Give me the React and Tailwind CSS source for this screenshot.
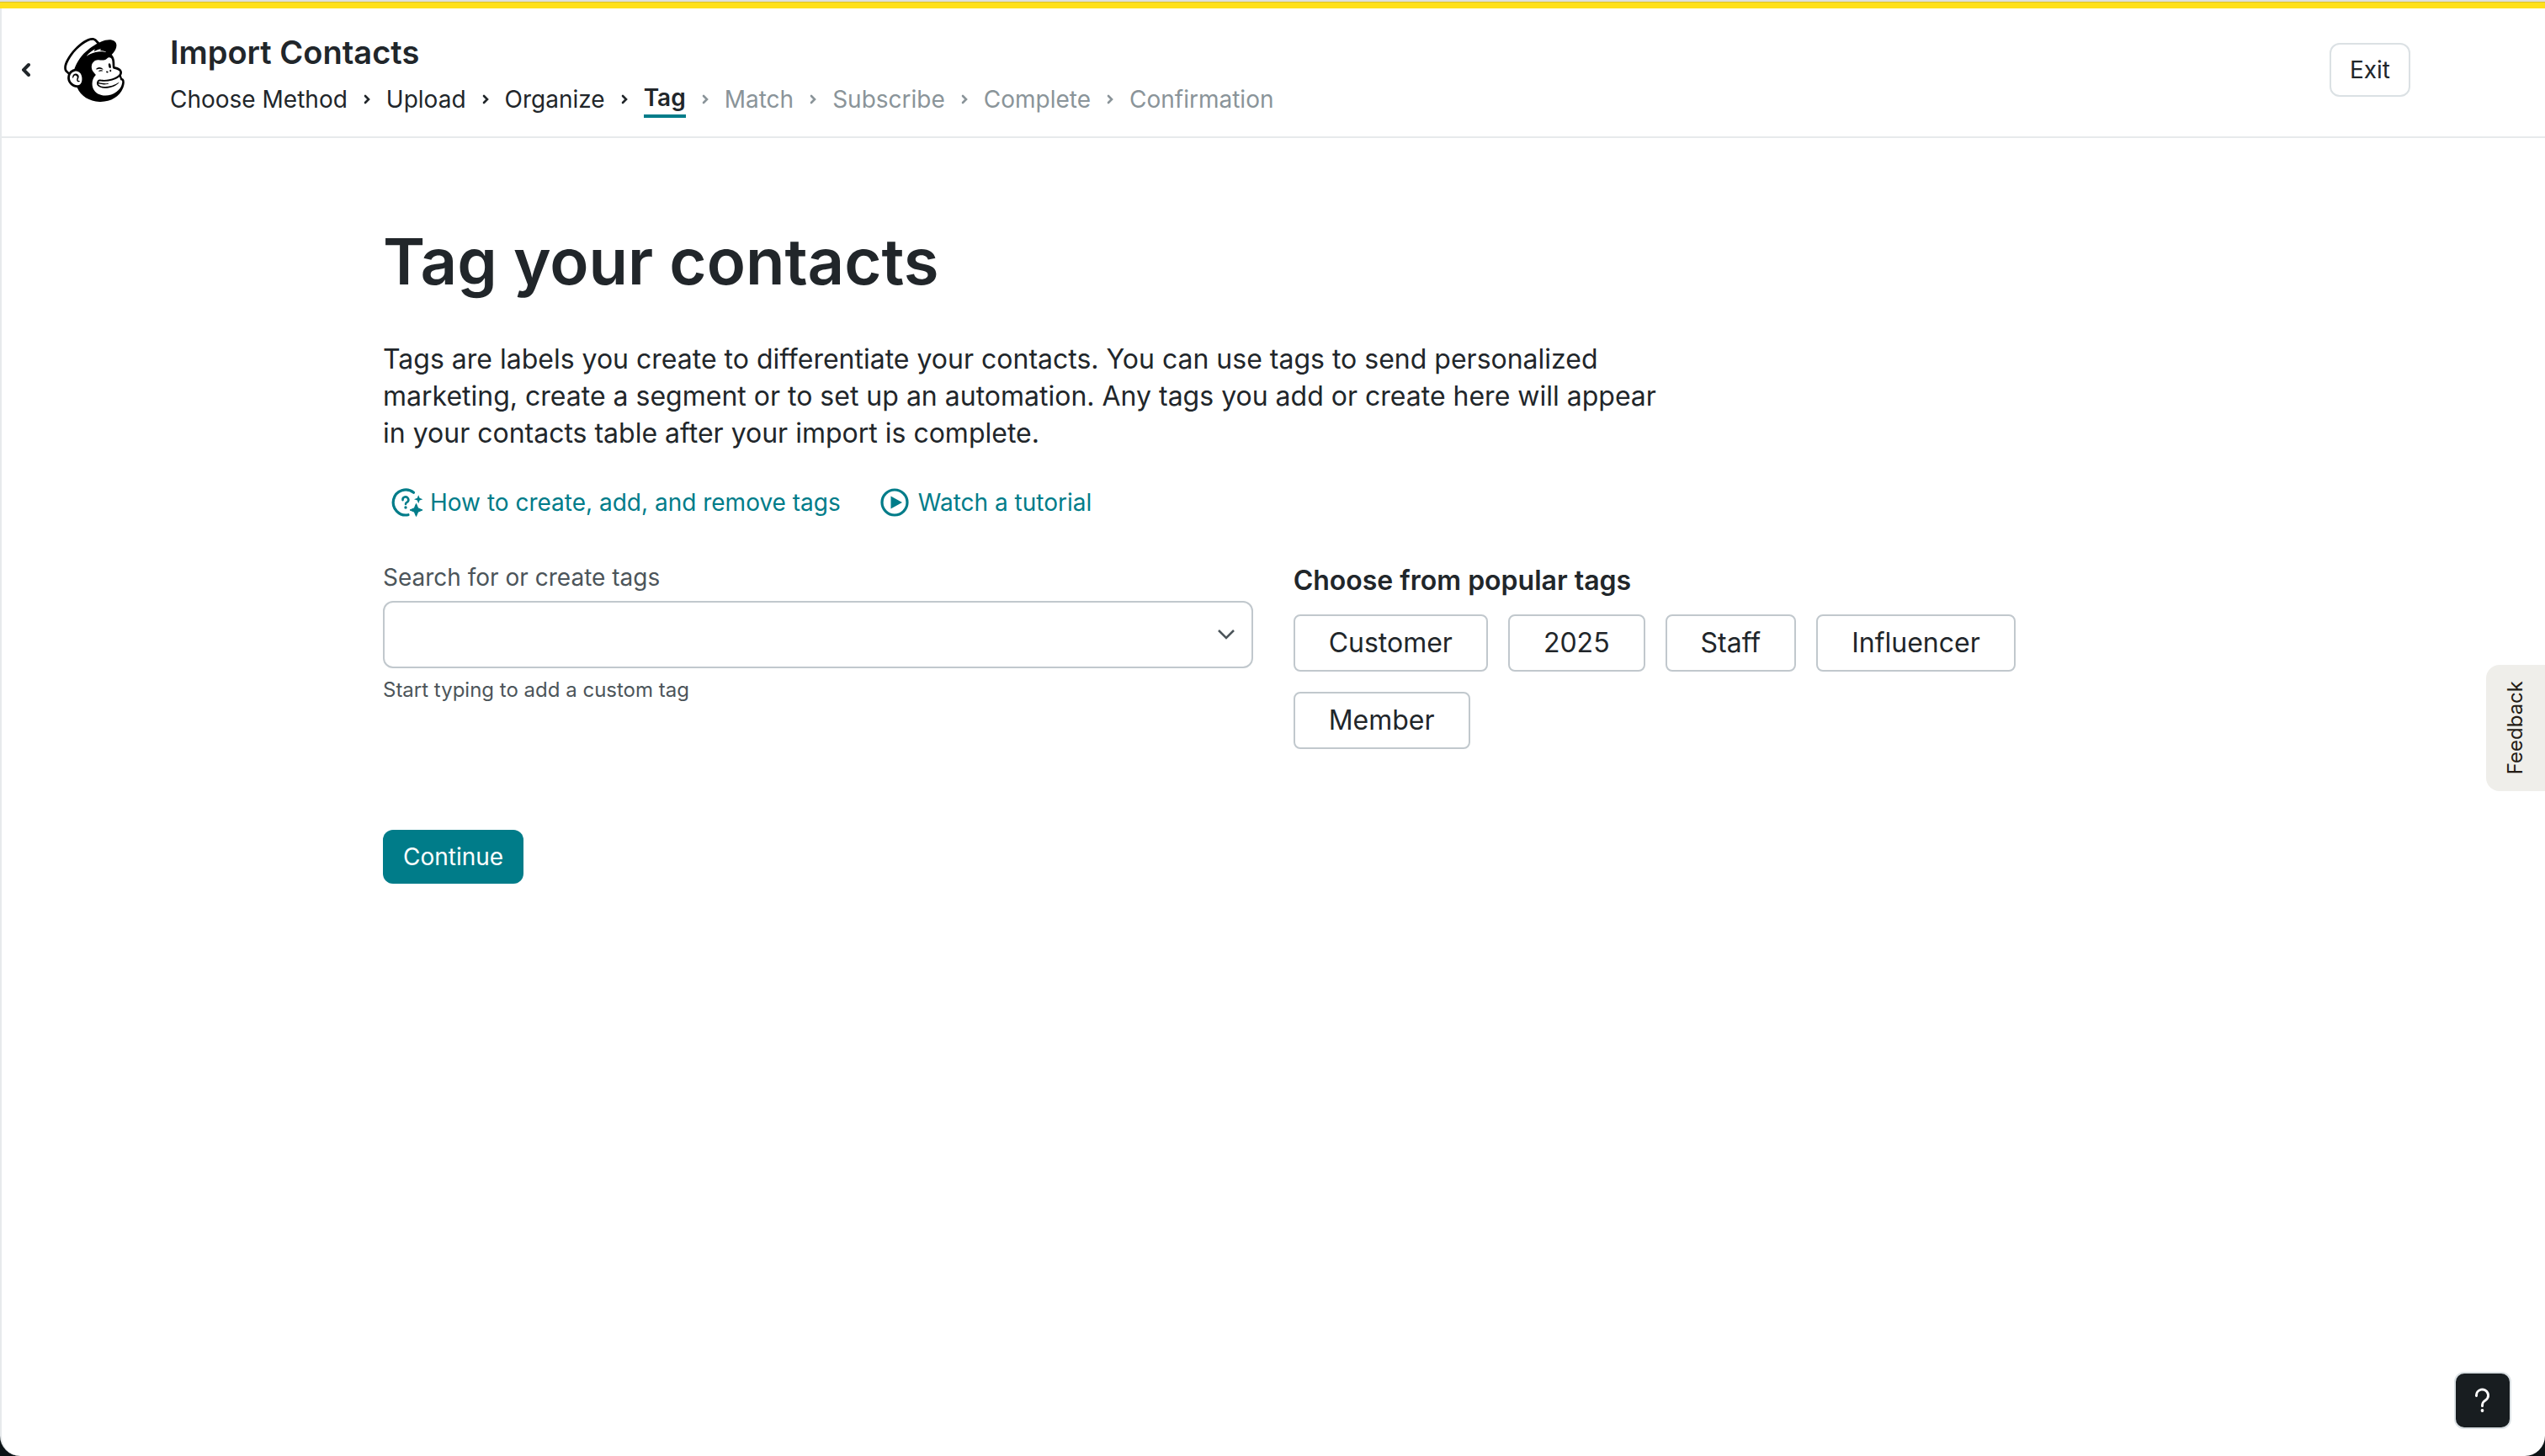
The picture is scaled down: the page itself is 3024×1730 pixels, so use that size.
import React, { useState } from "react";
import { SiMailchimp } from "react-icons/si";

const steps = [
  "Choose Method",
  "Upload",
  "Organize",
  "Tag",
  "Match",
  "Subscribe",
  "Complete",
  "Confirmation",
];
const currentStep = 3;

const popularTags = ["Customer", "2025", "Staff", "Influencer", "Member"];

function HelpSparkleIcon() {
  return (
    <svg viewBox="0 0 40 40" className="w-10 h-10" fill="none" aria-hidden="true">
      <path
        d="M28.500 8.200A15 15 0 1 0 22 34.700"
        stroke="currentColor"
        strokeWidth="3.200"
        strokeLinecap="round"
      />
      <path
        d="M15.500 17.200A3.400 3.400 0 1 1 20.800 19.600C19.500 20.300 19 20.800 19 22"
        stroke="currentColor"
        strokeWidth="2.600"
        strokeLinecap="round"
      />
      <circle cx="19" cy="26" r="1.700" fill="currentColor" />
      <path
        d="M34.200 11.200l1.400 3.600 3.800 1.400-3.800 1.400-1.400 3.600-1.400-3.600-3.800-1.400 3.800-1.400z"
        fill="currentColor"
      />
      <path
        d="M31.500 21.500l2.200 5.300 5.300 2.200-5.300 2.200-2.200 5.300-2.200-5.300-5.300-2.200 5.300-2.200z"
        fill="currentColor"
        stroke="currentColor"
      />
    </svg>
  );
}

function PlayCircleIcon() {
  return (
    <svg viewBox="0 0 40 40" className="w-10 h-10" fill="none" aria-hidden="true">
      <circle cx="20" cy="20" r="15" stroke="currentColor" strokeWidth="3.200" />
      <path d="M15.500 12.500l13.500 7.500-13.500 7.500z" fill="currentColor" />
    </svg>
  );
}

function StepChevron() {
  return (
    <svg viewBox="0 0 8 12" className="w-2 h-3" fill="none" aria-hidden="true">
      <path d="M2 2l4 4-4 4" stroke="currentColor" strokeWidth="2.600" strokeLinecap="round" />
    </svg>
  );
}

function Header() {
  return (
    <header className="flex items-center h-[154px] pl-6 pr-40 pb-1.5 border-b-2 border-[#e7eaec]">
      <button type="button" aria-label="Back" className="w-4 h-5">
        <svg viewBox="0 0 16 20" className="w-4 h-5" fill="none" aria-hidden="true">
          <path d="M8 4l-6 6 6 6" stroke="currentColor" strokeWidth="4" strokeLinecap="round" />
        </svg>
      </button>
      <SiMailchimp className="w-[76px] h-[76px] ml-8 text-black" />
      <div className="flex flex-col ml-[52px] pt-2.5">
        <p className="text-[38px] leading-[52px] font-semibold">Import Contacts</p>
        <ol className="flex items-center mt-2 text-[28px] leading-[44px]">
          {steps.map((step, i) => (
            <li
              key={step}
              className={i > currentStep ? "flex items-center text-[#8a9499]" : "flex items-center"}
            >
              {i > 0 && (
                <span className="px-[19px]">
                  <StepChevron />
                </span>
              )}
              {i === currentStep ? (
                <span className="font-semibold border-b-4 border-[#007c89] leading-10">{step}</span>
              ) : (
                <span>{step}</span>
              )}
            </li>
          ))}
        </ol>
      </div>
      <button
        type="button"
        className="ml-auto h-16 px-[22px] rounded-xl border-2 border-[#dbe1e4] text-[28px]"
      >
        Exit
      </button>
    </header>
  );
}

export default function App() {
  const [tag, setTag] = useState("");

  return (
    <div className="min-h-screen bg-[#0c1416] font-[Inter,sans-serif] text-[#241c15]">
      <div className="min-h-screen bg-white rounded-b-3xl border-l-2 border-[#e7eaec] text-[#21262a]">
        <div className="h-[10px] -ml-[2px] bg-[#ffe01b] border-t-2 border-[#dfe0dc]">
          <div className="h-px bg-[#dcc22a]" />
        </div>
        <Header />

        <main className="pl-[453px] pr-[626px] pt-24">
          <h1 className="text-[76px] leading-[100px] font-semibold">Tag your contacts</h1>
          <p className="mt-[45px] max-w-[1530px] text-[32px] leading-[44px]">
            Tags are labels you create to differentiate your contacts. You can use tags to send
            personalized marketing, create a segment or to set up an automation. Any tags you add or
            create here will appear in your contacts table after your import is complete.
          </p>

          <div className="flex gap-11 mt-[39px] pl-2 text-[28px] text-[#007c89]">
            <a href="#tags-help" className="flex items-center gap-2">
              <HelpSparkleIcon />
              How to create, add, and remove tags
            </a>
            <a href="#tutorial" className="flex items-center gap-2">
              <PlayCircleIcon />
              Watch a tutorial
            </a>
          </div>

          <div className="flex items-start gap-12 mt-12">
            <div className="flex flex-col flex-[6]">
              <label htmlFor="tag-search" className="text-[28px] leading-10 text-[#4c555a]">
                Search for or create tags
              </label>
              <div className="relative mt-2">
                <input
                  id="tag-search"
                  type="text"
                  value={tag}
                  onChange={(e) => setTag(e.target.value)}
                  className="block w-full h-20 px-6 pr-16 rounded-xl border-2 border-[#c1c8cd] text-[32px]"
                />
                <svg
                  viewBox="0 0 20 12"
                  className="absolute right-[22px] top-[34px] w-5 h-3 text-[#4c555a]"
                  fill="none"
                  aria-hidden="true"
                >
                  <path d="M1 1l9 9 9-9" stroke="currentColor" strokeWidth="2.500" />
                </svg>
              </div>
              <p className="mt-2 text-[24px] leading-9 text-[#4c555a]">
                Start typing to add a custom tag
              </p>
            </div>

            <div className="flex-[5]">
              <h2 className="text-[32px] leading-[48px] font-semibold">Choose from popular tags</h2>
              <div className="flex flex-wrap gap-6 mt-4">
                {popularTags.map((name) => (
                  <button
                    key={name}
                    type="button"
                    onClick={() => setTag(name)}
                    className="h-[68px] px-10 rounded-lg border-2 border-[#c1c8cd] text-[32px]"
                  >
                    {name}
                  </button>
                ))}
              </div>
            </div>
          </div>

          <button
            type="button"
            className="mt-24 h-16 px-6 rounded-xl bg-[#007c89] text-white text-[28px]"
          >
            Continue
          </button>
        </main>
      </div>

      {/* Feedback tab on the right edge */}
      <button
        type="button"
        className="fixed right-0 top-[790px] w-[70px] h-[150px] flex items-center justify-center rounded-l-2xl bg-[#efeeea] text-[#241c15] text-[24px]"
      >
        <span className="[writing-mode:vertical-rl] rotate-180">Feedback</span>
      </button>

      {/* Help */}
      <button
        type="button"
        aria-label="Help"
        className="fixed right-10 bottom-8 w-[68px] h-[68px] flex items-center justify-center rounded-xl border-2 border-[#dbe1e4] bg-[#181d20] text-white"
      >
        <svg viewBox="0 0 20 30" className="w-5 h-[30px]" fill="none" aria-hidden="true">
          <path
            d="M2.500 9.500A7 7 0 1 1 13 15C10.500 16.500 9.500 17.500 9.500 21.500"
            stroke="currentColor"
            strokeWidth="3"
            strokeLinecap="round"
          />
          <circle cx="9.500" cy="27" r="1.900" fill="currentColor" />
        </svg>
      </button>
    </div>
  );
}
